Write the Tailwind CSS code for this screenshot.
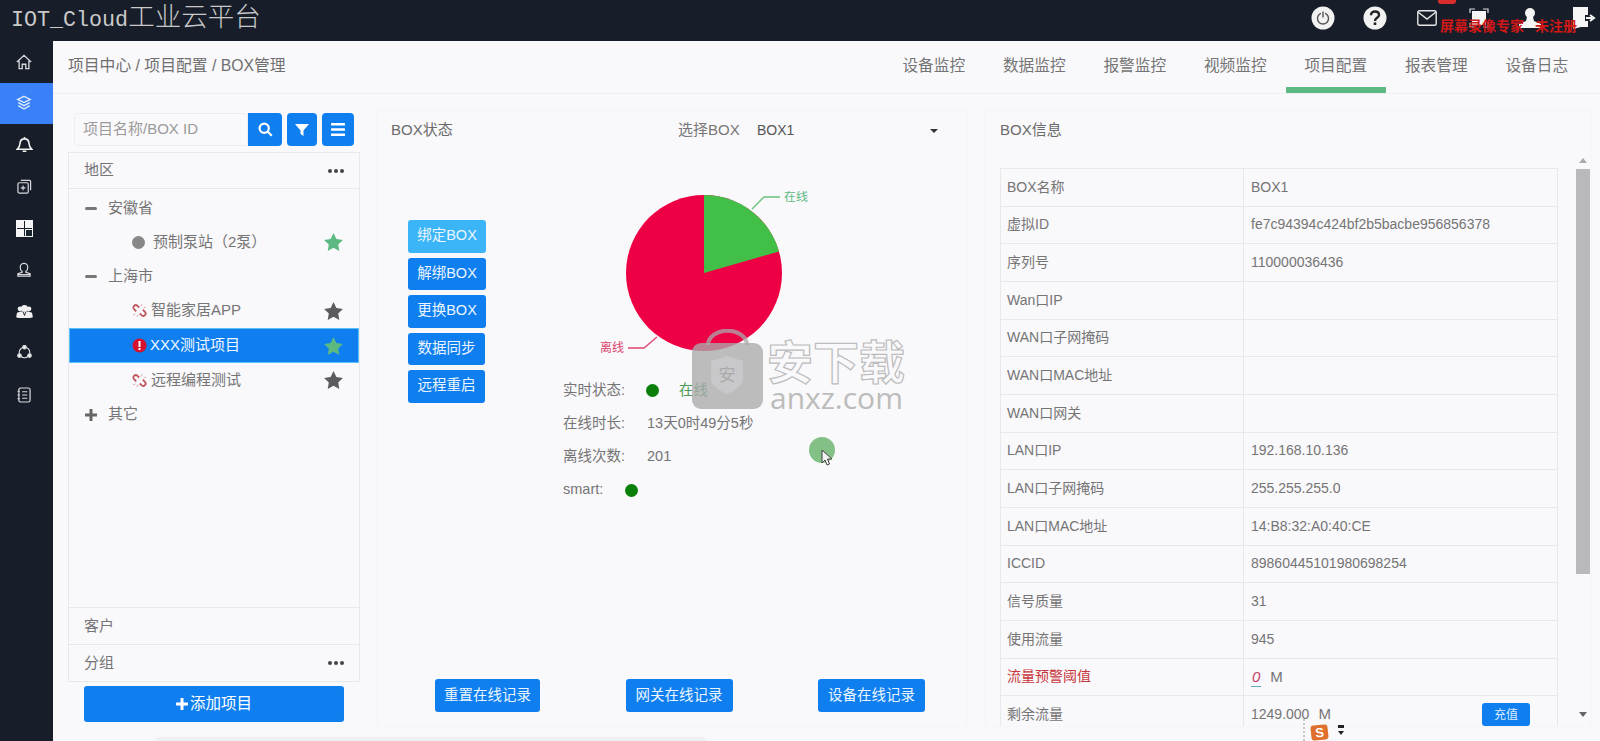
<!DOCTYPE html>
<html lang="zh">
<head>
<meta charset="utf-8">
<script src="https://cdn.jsdelivr.net/npm/@tailwindcss/browser@4"></script>
<title>IOT_Cloud</title>
</head>
<body class="m-0 overflow-hidden">
<div class="relative w-[1600px] h-[741px] overflow-hidden flex flex-col bg-[#f9f8fb] text-[#757575] text-[14px] font-['Liberation_Sans','Noto_Sans_CJK_SC',sans-serif]">

  <!-- top bar -->
  <header class="h-[41px] shrink-0 bg-[#171e29] flex items-center justify-between pl-[11px] pb-[3px]">
    <div class="text-[#c9c9c9] flex items-baseline leading-none mb-[5px]">
      <span class="text-[21.7px] font-['Liberation_Mono',monospace]">IOT_Cloud</span><span class="text-[26.5px] font-light font-['Noto_Sans_CJK_SC',sans-serif]">工业云平台</span>
    </div>
    <div class="flex items-center h-[30px] pb-[2px] pr-[4px]">
      <svg class="w-[24px] h-[24px] mr-[28px]" viewBox="0 0 24 24"><circle cx="12" cy="12" r="11.5" fill="#f2f2f2"/><circle cx="12" cy="12.5" r="5.5" fill="none" stroke="#555" stroke-width="1.4"/><path d="M12 5.500v6" stroke="#f2f2f2" stroke-width="4"/><path d="M12 5.500v6" stroke="#555" stroke-width="1.4"/></svg>
      <svg class="w-[24px] h-[24px] mr-[30px]" viewBox="0 0 24 24"><circle cx="12" cy="12" r="11.5" fill="#f2f2f2"/><path d="M8 9.200c0-2.400 1.800-3.700 4-3.700s4 1.300 4 3.400c0 3-4 2.800-4 6" fill="none" stroke="#222" stroke-width="2.400"/><rect x="10.700" y="16.400" width="2.600" height="2.600" fill="#222"/></svg>
      <svg class="w-[20px] h-[16px] mr-[32px]" viewBox="0 0 20 16"><rect x=".8" y=".8" width="18.400" height="14.400" rx="1.500" fill="none" stroke="#e6e6e6" stroke-width="1.400"/><path d="M1 2l9 7 9-7" fill="none" stroke="#e6e6e6" stroke-width="1.400"/></svg>
      <svg class="w-[20px] h-[20px] mr-[29px]" viewBox="0 0 20 20"><path d="M1 5V1h5M14 1h5v4M1 15v4h5M14 19h5v-4" fill="none" stroke="#dcdcdc" stroke-width="1.200"/><rect x="3" y="3" width="14" height="14" fill="#f5f5f5"/></svg>
      <svg class="w-[24px] h-[22px] mr-[30px]" viewBox="0 0 24 22"><circle cx="12" cy="6" r="5" fill="#f5f5f5"/><path d="M9 10h6l1 4 7 3v4H1v-4l7-3z" fill="#f5f5f5"/></svg>
      <svg class="w-[24px] h-[24px]" viewBox="0 0 24 24"><path d="M1 1h15v8h-3v6h3v6H9l-8 2z" fill="#f5f5f5"/><path d="M14 12h6M18 9l4 3-4 3" fill="none" stroke="#f5f5f5" stroke-width="2"/></svg>
    </div>
  </header>

  <div class="flex flex-1 min-h-0">
    <!-- sidebar -->
    <nav class="w-[53px] shrink-0 bg-[#171e29] flex flex-col text-[#d9d9dd]">
      <div class="h-[41.6px] pr-[5px] flex items-center justify-center"><svg class="w-[16px] h-[16px]" viewBox="0 0 18 18" fill="none" stroke="currentColor" stroke-width="1.500"><path d="M1 9l8-7.500L17 9M3.500 7.500V16.500h3.500v-5h4v5h3.500V7.500"/></svg></div>
      <div class="h-[41.6px] pr-[5px] bg-[#3a80f6] flex items-center justify-center"><svg class="w-[16px] h-[16px]" viewBox="0 0 18 18" fill="none" stroke="#dbeafe" stroke-width="1.600"><path d="M9 1.500l7 3.500-7 3.500L2 5zM2.500 8.500L9 12l6.500-3.500M2.500 12L9 15.800 15.500 12"/></svg></div>
      <div class="h-[41.6px] pr-[5px] flex items-center justify-center"><svg class="w-[17px] h-[17px]" viewBox="0 0 18 18" fill="none" stroke="#f2f2f2" stroke-width="1.700"><path d="M1.500 14h15c-1.800-1.500-2.500-3-2.700-6-.2-3-2-5-4.800-5S4.400 5 4.200 8c-.2 3-.9 4.500-2.700 6zM9 1v2M7 16.200h4"/></svg></div>
      <div class="h-[41.6px] pr-[5px] flex items-center justify-center"><svg class="w-[15px] h-[15px]" viewBox="0 0 16 16" fill="none" stroke="currentColor" stroke-width="1.300"><rect x="1" y="4" width="11" height="11" rx="1.500"/><path d="M4 1.500h9.500a1 1 0 0 1 1 1V12M6.500 7v5M4 9.500h5"/></svg></div>
      <div class="h-[41.6px] pr-[5px] flex items-center justify-center"><svg class="w-[17px] h-[17px]" viewBox="0 0 17 17"><rect width="8" height="8" fill="#f5f5f5"/><rect x="9" width="8" height="8" fill="#f5f5f5"/><rect y="9" width="8" height="8" fill="#f5f5f5"/><rect x=".5" y=".5" width="16" height="16" fill="none" stroke="#f5f5f5"/><rect x="9.500" y="9.500" width="7" height="7" fill="#17242c" stroke="#f5f5f5"/></svg></div>
      <div class="h-[41.6px] pr-[5px] flex items-center justify-center"><svg class="w-[16px] h-[17px]" viewBox="0 0 17 17" fill="none" stroke="currentColor" stroke-width="1.300"><path d="M6.500 10.500C5 9.500 4.500 8 4.500 6a4 4 0 0 1 8 0c0 2-.5 3.500-2 4.500v1l4.500 1.500v2.500H2V13l4.500-1.500zM2 13.800h13"/></svg></div>
      <div class="h-[41.6px] pr-[5px] flex items-center justify-center"><svg class="w-[17px] h-[15px]" viewBox="0 0 19 17" fill="#f0f0f0"><circle cx="9.500" cy="5" r="3.800"/><circle cx="4.500" cy="5.500" r="2.800"/><circle cx="14.500" cy="5.500" r="2.800"/><path d="M0 15l1-5 4-1.500h9l4 1.500 1 5-3 1H3z"/><path d="M8 9l1.500 4L11 9" stroke="#171e29" fill="none"/></svg></div>
      <div class="h-[41.6px] pr-[5px] flex items-center justify-center"><svg class="w-[15px] h-[15px]" viewBox="0 0 17 17" fill="none" stroke="currentColor" stroke-width="1.300"><circle cx="8.500" cy="8.500" r="6"/><circle cx="8.500" cy="2.500" r="2" fill="#f0f0f0"/><circle cx="2.800" cy="12" r="2" fill="#f0f0f0"/><circle cx="14.200" cy="12" r="2" fill="#f0f0f0"/></svg></div>
      <div class="h-[41.6px] pr-[5px] flex items-center justify-center"><svg class="w-[14px] h-[16px]" viewBox="0 0 15 17" fill="none" stroke="currentColor" stroke-width="1.300"><rect x="2" y="1" width="12" height="15" rx="2"/><path d="M5.500 5h5.500M5.500 8.500h5.500M5.500 12h5.500M.5 4.500h2.500M.5 8.500h2.500M.5 12.500h2.500"/></svg></div>
    </nav>

    <main class="flex-1 min-w-0 flex flex-col">
      <!-- header row -->
      <div class="h-[53px] shrink-0 border-b border-[#efeef1] flex items-start justify-between pl-[15px] pr-[13px]">
        <div class="text-[15.800px] h-[50px] flex items-center text-[#6f6f6f]">项目中心 / 项目配置 / BOX管理</div>
        <div class="flex text-[15.700px] text-[#757575]">
          <a class="w-[100.500px] h-[52px] pb-[2px] flex items-center justify-center">设备监控</a>
          <a class="w-[100.500px] h-[52px] pb-[2px] flex items-center justify-center">数据监控</a>
          <a class="w-[100.500px] h-[52px] pb-[2px] flex items-center justify-center">报警监控</a>
          <a class="w-[100.500px] h-[52px] pb-[2px] flex items-center justify-center">视频监控</a>
          <a class="w-[100.500px] h-[52px] pt-[4px] flex items-center justify-center border-b-[6px] border-[#5cb982]">项目配置</a>
          <a class="w-[100.500px] h-[52px] pb-[2px] flex items-center justify-center">报表管理</a>
          <a class="w-[100.500px] h-[52px] pb-[2px] flex items-center justify-center">设备日志</a>
        </div>
      </div>

      <!-- panels -->
      <div class="flex gap-[16px] pl-[15px] pt-[16px] h-[633px]">
        <!-- left panel -->
        <section class="w-[292px] shrink-0 flex flex-col">
          <div class="flex px-[6px] pt-[3px] h-[42px] shrink-0">
            <div class="w-[174px] h-[33px] border border-[#edecef] rounded-l flex items-center pl-[8px] text-[#9a9a9a] text-[15px]">项目名称/BOX ID</div>
            <button class="w-[34px] h-[33px] bg-[#0f7ff0] rounded-r flex items-center justify-center"><svg class="w-[15px] h-[15px]" viewBox="0 0 15 15" fill="none" stroke="#fff" stroke-width="2.200"><circle cx="6.200" cy="6.200" r="4.600"/><path d="M9.800 9.800l4 4"/></svg></button>
            <button class="w-[30px] h-[33px] ml-[5px] bg-[#0f7ff0] rounded flex items-center justify-center"><svg class="w-[14px] h-[14px]" viewBox="0 0 14 14" fill="#fff"><path d="M0 1h14L8.500 7.500V13L5.500 11V7.500z"/></svg></button>
            <button class="w-[32px] h-[33px] ml-[5px] bg-[#0f7ff0] rounded flex items-center justify-center"><svg class="w-[14px] h-[13px]" viewBox="0 0 14 13" fill="#fff"><rect width="14" height="2.400" rx=".5"/><rect y="5.300" width="14" height="2.400" rx=".5"/><rect y="10.600" width="14" height="2.400" rx=".5"/></svg></button>
          </div>
          <div class="h-[530px] shrink-0 border border-[#e8e7ea] flex flex-col">
            <div class="h-[36px] shrink-0 border-b border-[#e8e7ea] flex items-center justify-between pl-[15px] pr-[15px] text-[15px]"><span>地区</span><span class="flex gap-[2px]"><i class="w-[4px] h-[4px] rounded-full bg-[#444]"></i><i class="w-[4px] h-[4px] rounded-full bg-[#444]"></i><i class="w-[4px] h-[4px] rounded-full bg-[#444]"></i></span></div>
            <div class="flex-1 pt-[2px] text-[15px]">
              <div class="h-[34.200px] flex items-center pl-[16px]"><i class="w-[12px] h-[3px] bg-[#777] rounded-sm mr-[11px]"></i>安徽省</div>
              <div class="h-[34.200px] flex items-center justify-between pl-[63px] pr-[16px]"><span class="flex items-center"><i class="w-[13px] h-[13px] rounded-full bg-[#888] mr-[8px]"></i>预制泵站（2泵）</span><svg class="w-[19px] h-[18px]" viewBox="0 0 24 23" fill="#5cb982"><path d="M12 0l3.700 7.600 8.300 1.200-6 5.900 1.400 8.300L12 19l-7.400 4L6 14.700 0 8.800l8.300-1.200z"/></svg></div>
              <div class="h-[34.200px] flex items-center pl-[16px]"><i class="w-[12px] h-[3px] bg-[#777] rounded-sm mr-[11px]"></i>上海市</div>
              <div class="h-[34.200px] flex items-center justify-between pl-[63px] pr-[16px]"><span class="flex items-center"><svg class="w-[15px] h-[15px] mr-[4px]" viewBox="0 0 15 15" fill="none" stroke="#c0555f" stroke-width="1.800"><path d="M7.200 4.500 5.500 2.800a2.400 2.400 0 0 0-3.400 3.400L4.200 8.300"/><path d="M7.800 10.500l1.700 1.700a2.400 2.400 0 0 0 3.400-3.400L10.800 6.700"/><path d="M9 3.500l1-2.500M11.500 5l2.500-1M3.500 11l-2.500 1M6 11.500l-1 2.500" stroke="#d9b0b0" stroke-width="1"/></svg>智能家居APP</span><svg class="w-[19px] h-[18px]" viewBox="0 0 24 23" fill="#5b5b60"><path d="M12 0l3.700 7.600 8.300 1.200-6 5.900 1.400 8.300L12 19l-7.400 4L6 14.700 0 8.800l8.300-1.200z"/></svg></div>
              <div class="h-[35.500px] bg-[#0f7ff0] border border-[#5cc0fa] flex items-center justify-between pl-[62px] pr-[15px] text-[#f2f8ff]"><span class="flex items-center"><svg class="w-[15px] h-[15px] mr-[3px]" viewBox="0 0 15 15"><circle cx="7.500" cy="7.500" r="7" fill="#d4122f"/><rect x="6.500" y="3" width="2" height="6" fill="#fff"/><rect x="6.500" y="10" width="2" height="2" fill="#fff"/></svg>XXX测试项目</span><svg class="w-[19px] h-[18px]" viewBox="0 0 24 23" fill="#5cb982"><path d="M12 0l3.700 7.600 8.300 1.200-6 5.900 1.400 8.300L12 19l-7.400 4L6 14.700 0 8.800l8.300-1.200z"/></svg></div>
              <div class="h-[34.200px] flex items-center justify-between pl-[63px] pr-[16px]"><span class="flex items-center"><svg class="w-[15px] h-[15px] mr-[4px]" viewBox="0 0 15 15" fill="none" stroke="#c0555f" stroke-width="1.800"><path d="M7.200 4.500 5.500 2.800a2.400 2.400 0 0 0-3.400 3.400L4.200 8.300"/><path d="M7.800 10.500l1.700 1.700a2.400 2.400 0 0 0 3.400-3.400L10.800 6.700"/><path d="M9 3.500l1-2.500M11.500 5l2.500-1M3.500 11l-2.500 1M6 11.500l-1 2.500" stroke="#d9b0b0" stroke-width="1"/></svg>远程编程测试</span><svg class="w-[19px] h-[18px]" viewBox="0 0 24 23" fill="#5b5b60"><path d="M12 0l3.700 7.600 8.300 1.200-6 5.900 1.400 8.300L12 19l-7.400 4L6 14.700 0 8.800l8.300-1.200z"/></svg></div>
              <div class="h-[34.200px] flex items-center pl-[16px]"><svg class="w-[12px] h-[12px] mr-[11px]" viewBox="0 0 12 12" fill="#666"><rect y="4.500" width="12" height="3"/><rect x="4.500" width="3" height="12"/></svg>其它</div>
            </div>
            <div class="h-[37px] shrink-0 border-t border-[#e8e7ea] flex items-center pl-[15px] text-[15px]">客户</div>
            <div class="h-[37px] shrink-0 border-t border-[#e8e7ea] flex items-center justify-between pl-[15px] pr-[15px] text-[15px]"><span>分组</span><span class="flex gap-[2px]"><i class="w-[4px] h-[4px] rounded-full bg-[#444]"></i><i class="w-[4px] h-[4px] rounded-full bg-[#444]"></i><i class="w-[4px] h-[4px] rounded-full bg-[#444]"></i></span></div>
          </div>
          <button class="mt-[4px] mx-[16px] h-[36px] bg-[#0f7ff0] rounded-[3px] text-white text-[15.500px] flex items-center justify-center"><svg class="w-[12px] h-[12px] mr-[2px]" viewBox="0 0 12 12" fill="#fff"><rect y="4.500" width="12" height="3"/><rect x="4.500" width="3" height="12"/></svg>添加项目</button>
        </section>

        <!-- middle panel -->
        <section class="w-[592px] shrink-0 h-[617px] border border-[#f5f4f7] rounded-sm flex flex-col">
          <div class="h-[39px] shrink-0 flex items-center pl-[14px] text-[15px] text-[#6b6b6b]">
            <span class="w-[287px]">BOX状态</span>
            <span class="w-[79px] text-[#777]">选择BOX</span>
            <span class="w-[173px] text-[14px] text-[#555]">BOX1</span>
            <i class="w-0 h-0 border-x-[4px] border-x-transparent border-t-[4px] border-t-[#333]"></i>
          </div>
          <div class="flex flex-1 min-h-0">
            <div class="w-[78px] ml-[31px] mt-[70px] flex flex-col gap-[5px] text-[14.500px] text-[#eaf5ff]">
              <button class="h-[32.500px] w-[78px] bg-[#3bb5f8] rounded-[3px]">绑定BOX</button>
              <button class="h-[32.500px] w-[78px] bg-[#0f7ff0] rounded-[3px]">解绑BOX</button>
              <button class="h-[32.500px] w-[78px] bg-[#0f7ff0] rounded-[3px]">更换BOX</button>
              <button class="h-[32.500px] w-[77px] bg-[#0f7ff0] rounded-[3px]">数据同步</button>
              <button class="h-[32.500px] w-[77px] bg-[#0f7ff0] rounded-[3px]">远程重启</button>
            </div>
            <div class="ml-[77px] mt-[41px] flex-1">
              <svg class="w-[262px] h-[183px] block" viewBox="0 0 262 183">
                <circle cx="141" cy="82" r="78" fill="#ee0044"/>
                <path d="M141 82V4A78 78 0 0 1 216 60.500Z" fill="#41bf47"/>
                <path d="M189 18l12-12h16" fill="none" stroke="#67c27a" stroke-width="1.300"/>
                <path d="M94 146l-13 11H65" fill="none" stroke="#e0456f" stroke-width="1.300"/>
                <text x="221" y="10" font-size="12" fill="#5cb982">在线</text>
                <text x="37" y="161" font-size="12" fill="#d9446c">离线</text>
              </svg>
              <div class="h-[33px] flex items-center text-[14.500px]"><span class="w-[83px]">实时状态:</span><i class="w-[13px] h-[13px] rounded-full bg-[#0a7f0a]"></i><span class="ml-[20px] text-[#4c9a55]">在线</span></div>
              <div class="h-[33.500px] flex items-center text-[14.500px]"><span class="w-[84px]">在线时长:</span><span>13天0时49分5秒</span></div>
              <div class="h-[33px] flex items-center text-[14.500px]"><span class="w-[84px]">离线次数:</span><span>201</span></div>
              <div class="h-[33px] flex items-center text-[14.500px]"><span class="w-[62px]">smart:</span><i class="w-[13px] h-[13px] rounded-full bg-[#0a7f0a]"></i></div>
            </div>
          </div>
          <div class="flex justify-between pl-[58px] pr-[42px] mb-[14px] text-[14.500px] text-[#eaf5ff]">
            <button class="w-[105px] h-[33px] bg-[#0f7ff0] rounded-[3px]">重置在线记录</button>
            <button class="w-[107px] h-[33px] bg-[#0f7ff0] rounded-[3px]">网关在线记录</button>
            <button class="w-[107px] h-[33px] bg-[#0f7ff0] rounded-[3px]">设备在线记录</button>
          </div>
        </section>

        <!-- right panel -->
        <section class="w-[608px] shrink-0 h-[617px] border border-[#f5f4f7] rounded-sm flex flex-col overflow-hidden">
          <div class="h-[39px] shrink-0 flex items-center pl-[15px] text-[15px] text-[#6b6b6b]">BOX信息</div>
          <div class="flex flex-1 min-h-0">
            <div class="w-[558px] ml-[15px] pt-[18px] overflow-hidden shrink-0">
              <table class="w-[558px] table-fixed border-collapse text-[14px]">
                <colgroup><col class="w-[243px]"><col></colgroup>
                <tbody>
                  <tr class="h-[37.670px]"><td class="border border-[#e8e7ea] pl-[6px]">BOX名称</td><td class="border border-[#e8e7ea] pl-[7px]">BOX1</td></tr>
                  <tr class="h-[37.670px]"><td class="border border-[#e8e7ea] pl-[6px]">虚拟ID</td><td class="border border-[#e8e7ea] pl-[7px]">fe7c94394c424bf2b5bacbe956856378</td></tr>
                  <tr class="h-[37.670px]"><td class="border border-[#e8e7ea] pl-[6px]">序列号</td><td class="border border-[#e8e7ea] pl-[7px]">110000036436</td></tr>
                  <tr class="h-[37.670px]"><td class="border border-[#e8e7ea] pl-[6px]">Wan口IP</td><td class="border border-[#e8e7ea] pl-[7px]"></td></tr>
                  <tr class="h-[37.670px]"><td class="border border-[#e8e7ea] pl-[6px]">WAN口子网掩码</td><td class="border border-[#e8e7ea] pl-[7px]"></td></tr>
                  <tr class="h-[37.670px]"><td class="border border-[#e8e7ea] pl-[6px]">WAN口MAC地址</td><td class="border border-[#e8e7ea] pl-[7px]"></td></tr>
                  <tr class="h-[37.670px]"><td class="border border-[#e8e7ea] pl-[6px]">WAN口网关</td><td class="border border-[#e8e7ea] pl-[7px]"></td></tr>
                  <tr class="h-[37.670px]"><td class="border border-[#e8e7ea] pl-[6px]">LAN口IP</td><td class="border border-[#e8e7ea] pl-[7px]">192.168.10.136</td></tr>
                  <tr class="h-[37.670px]"><td class="border border-[#e8e7ea] pl-[6px]">LAN口子网掩码</td><td class="border border-[#e8e7ea] pl-[7px]">255.255.255.0</td></tr>
                  <tr class="h-[37.670px]"><td class="border border-[#e8e7ea] pl-[6px]">LAN口MAC地址</td><td class="border border-[#e8e7ea] pl-[7px]">14:B8:32:A0:40:CE</td></tr>
                  <tr class="h-[37.670px]"><td class="border border-[#e8e7ea] pl-[6px]">ICCID</td><td class="border border-[#e8e7ea] pl-[7px]">89860445101980698254</td></tr>
                  <tr class="h-[37.670px]"><td class="border border-[#e8e7ea] pl-[6px]">信号质量</td><td class="border border-[#e8e7ea] pl-[7px]">31</td></tr>
                  <tr class="h-[37.670px]"><td class="border border-[#e8e7ea] pl-[6px]">使用流量</td><td class="border border-[#e8e7ea] pl-[7px]">945</td></tr>
                  <tr class="h-[37.670px]"><td class="border border-[#e8e7ea] pl-[6px] text-[#c8363c]">流量预警阈值</td><td class="border border-[#e8e7ea] pl-[7px] text-[15px]"><span class="italic text-[#c2406a] border-b border-[#5fa8c8] pb-[1px] px-[1px]">0</span><span class="ml-[9px]">M</span></td></tr>
                  <tr class="h-[37.670px]"><td class="border border-[#e8e7ea] pl-[6px]">剩余流量</td><td class="border border-[#e8e7ea] pl-[7px]"><div class="flex items-center justify-between pr-[27px]"><span>1249.000<span class="ml-[9px] text-[15px]">M</span></span><button class="w-[48px] h-[23px] bg-[#0f7ff0] rounded-[3px] text-[12px] text-[#dcecff]">充值</button></div></td></tr>
                </tbody>
              </table>
            </div>
            <div class="w-[14px] ml-[18px] flex flex-col items-center pt-[8px] pb-[7px]">
              <i class="w-0 h-0 border-x-[4px] border-x-transparent border-b-[5px] border-b-[#aaa]"></i>
              <div class="w-[14px] h-[405px] mt-[6px] bg-[#b9b8bb]"></div>
              <i class="mt-auto mb-[2px] w-0 h-0 border-x-[4px] border-x-transparent border-t-[5px] border-t-[#666]"></i>
            </div>
          </div>
        </section>
      </div>
      <div class="flex-1"></div>
    </main>
  </div>

  <!-- overlays -->
  <div class="absolute left-[153px] top-[737px] w-[556px] h-[8px] rounded-t-lg bg-[#f0eff2]"></div>

  <div class="absolute left-[1440px] top-[18px] text-[14px] leading-[18px] font-bold text-[#d01818] whitespace-nowrap font-['Liberation_Serif','Noto_Sans_CJK_SC',serif]">屏幕录像专家<span class="ml-[11px]">未注册</span></div>
  <div class="absolute left-[1438px] top-[-6px] w-[18px] h-[10px] bg-[#d92c2c] rounded-[3px]"></div>

  <div class="absolute left-[692px] top-[329px] w-[71px] h-[80px]">
    <svg class="w-[71px] h-[80px]" viewBox="0 0 71 80"><path d="M16 16a19 14 0 0 1 39 0" fill="none" stroke="#a9a9ad" stroke-opacity=".75" stroke-width="4"/><rect y="14" width="71" height="66" rx="9" fill="#aaa" fill-opacity=".78"/><path d="M35 27l16 5v18c0 7-9 12-16 15-7-3-16-8-16-15V32z" fill="#c8c8ca"/><text x="35" y="52" font-size="17" text-anchor="middle" fill="#aaa">安</text></svg>
  </div>
  <div class="absolute left-[767px] top-[336px] h-[46px] text-[46px] leading-[46px] font-bold text-transparent [-webkit-text-stroke:1.200px_#bcbcbc] whitespace-nowrap font-['Noto_Sans_CJK_SC',sans-serif]">安下载</div>
  <div class="absolute left-[770px] top-[383px] text-[30px] leading-[30px] text-[#bcbcbc] font-['Open_Sans',sans-serif] whitespace-nowrap">anxz.com</div>

  <div class="absolute left-[809px] top-[437px] w-[26px] h-[26px] rounded-full bg-[#82c086]"></div>
  <svg class="absolute left-[821px] top-[449px] w-[12px] h-[17px]" viewBox="0 0 12 17"><path d="M1 1v13l3-3 2 5 2.500-1-2-5H11z" fill="#f4f4f4" stroke="#444"/></svg>

  <div class="absolute left-[1303px] top-[719px] h-[22px] border-l-2 border-dotted border-[#c8c8c8]"></div>
  <div class="absolute left-[1311px] top-[725px] w-[17px] h-[15px] rounded-[3px] bg-[#e0702d] text-white text-[13px] leading-[15px] font-bold text-center -rotate-6">S</div>
  <div class="absolute left-[1338px] top-[725px] flex flex-col gap-[3px]"><i class="w-[6px] h-[3px] bg-[#222]"></i><i class="w-0 h-0 border-x-[3px] border-x-transparent border-t-[4px] border-t-[#222]"></i></div>
</div>
</body>
</html>
